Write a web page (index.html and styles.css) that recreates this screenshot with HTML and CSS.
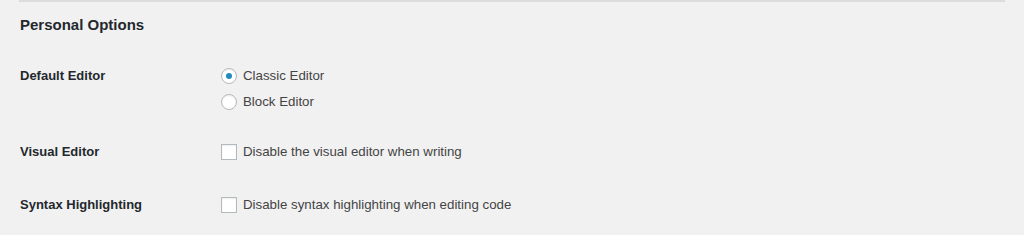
FILE: index.html
```
<!DOCTYPE html>
<html>
<head>
    <title>Personal Options</title>
    <link rel="stylesheet" href="styles.css">
</head>
<body>
<div class="top-edge"></div>
<div class="wrap">
    <h2 class="section-title">Personal Options</h2>
    <div class="form-table">
        <div class="row row-editor">
            <label class="row-label">Default Editor</label>
            <div class="row-field">
                <label class="option"><span class="radio checked"></span>Classic Editor</label>
                <label class="option"><span class="radio"></span>Block Editor</label>
            </div>
        </div>
        <div class="row">
            <label class="row-label">Visual Editor</label>
            <div class="row-field">
                <label class="option"><span class="checkbox"></span>Disable the visual editor when writing</label>
            </div>
        </div>
        <div class="row">
            <label class="row-label">Syntax Highlighting</label>
            <div class="row-field">
                <label class="option"><span class="checkbox"></span>Disable syntax highlighting when editing code</label>
            </div>
        </div>
    </div>
</div>
</body>
</html>
```

FILE: styles.css
```
html, body {
    margin: 0;
    padding: 0;
    background: #f1f1f1;
}
body {
    font-family: "Liberation Sans", Arial, sans-serif;
    color: #444;
    font-size: 13px;
}
.top-edge {
    height: 2px;
    margin: 0 19px;
    background: #dcdcdc;
}
.wrap {
    padding: 0 20px;
}
.section-title {
    margin: 13px 0 0;
    font-size: 15px;
    font-weight: 600;
    color: #23282d;
    line-height: 20px;
}
.form-table {
    display: flex;
    flex-direction: column;
    margin-top: 31px;
}
.row {
    display: grid;
    grid-template-columns: 201px 1fr;
    margin-bottom: 33px;
}
.row-editor {
    margin-bottom: 30px;
}
.row-label {
    font-weight: 600;
    font-size: 13px;
    color: #23282d;
    line-height: 20px;
}
.row-field {
    display: flex;
    flex-direction: column;
    gap: 6px;
}
.option {
    display: flex;
    align-items: center;
    line-height: 20px;
    font-size: 13.3px;
    color: #444;
}
.radio, .checkbox {
    width: 14px;
    height: 14px;
    border: 1px solid #b4b9be;
    background: #fff;
    box-shadow: inset 0 1px 2px rgba(0, 0, 0, 0.07);
    margin-right: 6px;
    flex: none;
    box-sizing: content-box;
}
.radio {
    border-radius: 50%;
    position: relative;
}
.radio.checked::after {
    content: "";
    position: absolute;
    left: 4px;
    top: 4px;
    width: 6px;
    height: 6px;
    border-radius: 50%;
    background: #1e8cbe;
}
```
